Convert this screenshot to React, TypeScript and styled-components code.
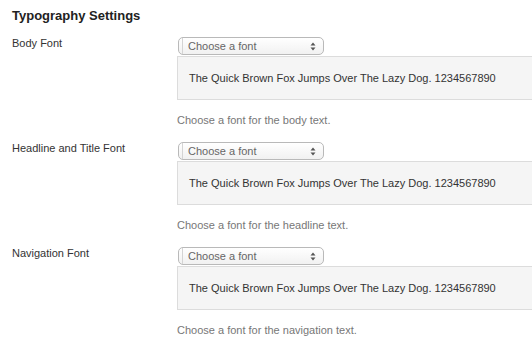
import React from "react";
import styled, { createGlobalStyle } from "styled-components";

const Global = createGlobalStyle`
  html, body { margin: 0; padding: 0; background: #fff; }
  body { font-family: "Liberation Sans", Arial, sans-serif; color: #333; overflow: hidden; }
`;

const Page = styled.div`
  width: 532px;
  height: 341px;
  overflow: hidden;
  padding: 10px 0 0 12px;
  box-sizing: border-box;
`;

const Title = styled.h3`
  margin: 0 0 10px 0;
  font-size: 13px;
  font-weight: bold;
  color: #222;
  line-height: 16px;
  position: relative;
  top: -2px;
`;

const Row = styled.div`
  display: grid;
  grid-template-columns: 165px 1fr;
  height: 105px;
`;

const Label = styled.div`
  font-size: 11px;
  color: #333;
  line-height: 14px;
`;

const Field = styled.div`
  display: flex;
  flex-direction: column;
  margin-right: -20px;
`;

const Select = styled.div`
  width: 146px;
  height: 18px;
  box-sizing: border-box;
  border: 1px solid #b9b9b9;
  border-radius: 5px;
  background: linear-gradient(#ffffff, #f1f1f1);
  display: flex;
  align-items: center;
  margin-left: 1px;
  margin-top: 1px;
`;

const SelectInner = styled.div`
  flex: 1;
  height: 100%;
  margin-left: 3px;
  border-left: 1px solid #d4d4d4;
  display: flex;
  align-items: center;
  padding-left: 5px;
  font-size: 11px;
  color: #666;
`;

const Arrows = styled.svg`
  width: 6px;
  height: 9px;
  margin-right: 7px;
`;

const Preview = styled.div`
  margin-top: 1px;
  height: 44px;
  box-sizing: border-box;
  border: 1px solid #dcdcdc;
  background: #f5f5f5;
  display: flex;
  align-items: center;
  padding-left: 11px;
  font-size: 11px;
  color: #333;
`;

const Desc = styled.div`
  margin-top: 13px;
  font-size: 11px;
  color: #777;
  line-height: 14px;
`;

const rows = [
  { label: "Body Font", desc: "Choose a font for the body text." },
  { label: "Headline and Title Font", desc: "Choose a font for the headline text." },
  { label: "Navigation Font", desc: "Choose a font for the navigation text." },
];

export default function App() {
  return (
    <>
      <Global />
      <Page>
        <Title>Typography Settings</Title>
        {rows.map((r) => (
          <Row key={r.label}>
            <Label>{r.label}</Label>
            <Field>
              <Select>
                <SelectInner>Choose a font</SelectInner>
                <Arrows viewBox="0 0 6 9">
                  <path d="M3 0.5 L5.5 3.5 L0.5 3.5 Z" fill="#555" />
                  <path d="M3 8.5 L5.5 5.5 L0.5 5.5 Z" fill="#555" />
                </Arrows>
              </Select>
              <Preview>The Quick Brown Fox Jumps Over The Lazy Dog. 1234567890</Preview>
              <Desc>{r.desc}</Desc>
            </Field>
          </Row>
        ))}
      </Page>
    </>
  );
}
